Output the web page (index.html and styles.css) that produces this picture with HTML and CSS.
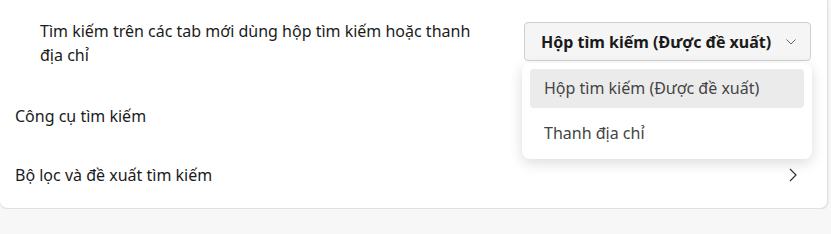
FILE: index.html
```html
<!DOCTYPE html>
<html lang="vi">
<head>
    <meta charset="UTF-8">
    <title>Tìm kiếm</title>
    <link rel="stylesheet" href="styles.css">
</head>
<body>
    <div class="card">
        <div class="row row-first">
            <p class="label label-indent">Tìm kiếm trên các tab mới dùng hộp tìm kiếm hoặc thanh địa chỉ</p>
            <div class="select">
                <button class="select-btn">
                    <span>Hộp tìm kiếm (Được đề xuất)</span>
                    <svg width="10" height="6" viewBox="0 0 10 6"><path d="M0.5 0.5 L5 5 L9.5 0.5" fill="none" stroke="#666" stroke-width="1"/></svg>
                </button>
                <ul class="menu">
                    <li class="menu-item active">Hộp tìm kiếm (Được đề xuất)</li>
                    <li class="menu-item">Thanh địa chỉ</li>
                </ul>
            </div>
        </div>
        <div class="row">
            <p class="label">Công cụ tìm kiếm</p>
        </div>
        <div class="row">
            <p class="label">Bộ lọc và đề xuất tìm kiếm</p>
            <svg class="chevron" width="8" height="14" viewBox="0 0 8 14"><path d="M1 1 L7 7 L1 13" fill="none" stroke="#333" stroke-width="1.2"/></svg>
        </div>
    </div>
</body>
</html>
```

FILE: styles.css
```css
body {
    margin: 0;
    background-color: #f7f7f7;
    font-family: "Noto Sans", "Segoe UI", sans-serif;
    font-size: 16px;
    color: #1b1b1b;
}

.card {
    width: 828px;
    height: 209px;
    box-sizing: border-box;
    background-color: #fff;
    border-right: 1px solid #e0e0e0;
    border-bottom: 1px solid #e0e0e0;
    border-radius: 0 0 8px 8px;
    box-shadow: 0 1px 2px rgba(0, 0, 0, 0.08);
}

.row {
    display: flex;
    align-items: center;
    justify-content: space-between;
    height: 59px;
    padding: 0 30px 0 15px;
}

.row-first {
    height: 86px;
    align-items: flex-start;
    padding: 0 16px 0 40px;
}

.label {
    margin: 0;
    line-height: 24px;
}

.label-indent {
    width: 440px;
    padding-top: 19px;
}

.select {
    position: relative;
    margin-top: 22px;
}

.select-btn {
    display: flex;
    align-items: center;
    justify-content: space-between;
    width: 287px;
    height: 39px;
    padding: 0 14px 0 16px;
    background-color: #f5f5f5;
    border: 1px solid #cfcfcf;
    border-radius: 4px;
    font-family: inherit;
    font-size: 16px;
    font-weight: bold;
    color: #1a1a1a;
}

.menu {
    position: absolute;
    top: 41px;
    left: -2px;
    width: 290px;
    margin: 0;
    padding: 6px 8px;
    box-sizing: border-box;
    list-style: none;
    background-color: #fff;
    border-radius: 8px;
    box-shadow: 0 4px 14px rgba(0, 0, 0, 0.14);
}

.menu-item {
    height: 39px;
    line-height: 39px;
    padding-left: 14px;
    border-radius: 4px;
    color: #444;
}

.menu-item + .menu-item {
    margin-top: 6px;
}

.menu-item.active {
    background-color: #ebebeb;
}
```
